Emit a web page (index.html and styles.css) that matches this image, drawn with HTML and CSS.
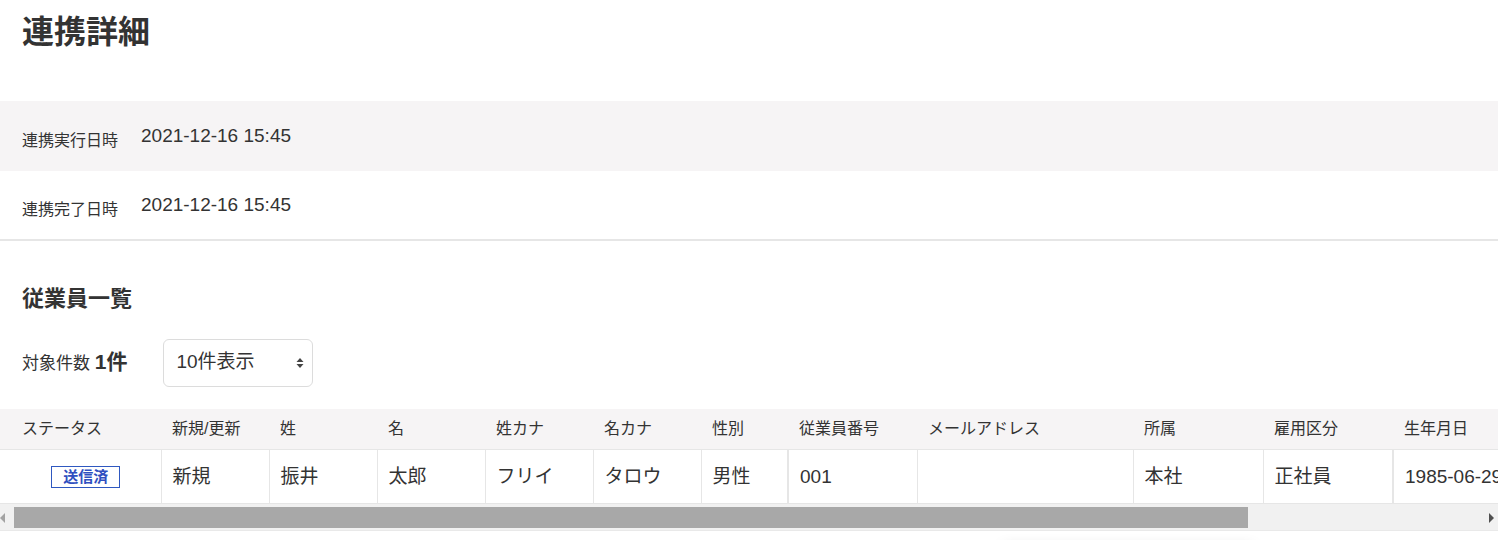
FILE: index.html
```html
<!DOCTYPE html>
<html lang="ja">
<head>
<meta charset="utf-8">
<title>連携詳細</title>
<link rel="stylesheet" href="styles.css">
</head>
<body>
<h1 class="page-title">連携詳細</h1>

<div class="info-list">
  <div class="info-row info-row--shaded">
    <span class="info-label">連携実行日時</span>
    <span class="info-value">2021-12-16 15:45</span>
  </div>
  <div class="info-row info-row--last">
    <span class="info-label">連携完了日時</span>
    <span class="info-value">2021-12-16 15:45</span>
  </div>
</div>

<section class="employees">
  <h2 class="section-title">従業員一覧</h2>
  <div class="count-row">
    <span class="count-label">対象件数 <strong class="count-num">1件</strong></span>
    <div class="select-box">
      <span class="select-text">10件表示</span>
      <svg class="select-arrows" width="8" height="12" viewBox="0 0 8 12"><path d="M4 1 L7.5 5 H0.5 Z M4 11 L7.5 7 H0.5 Z" fill="#444"/></svg>
    </div>
  </div>
</section>

<div class="table-scroll">
  <table class="emp-table">
    <colgroup>
      <col class="c161"><col class="c108"><col class="c108"><col class="c108"><col class="c108"><col class="c108"><col class="c87"><col class="c129"><col class="c216"><col class="c130"><col class="c130"><col class="c-last">
    </colgroup>
    <thead>
      <tr>
        <th class="first">ステータス</th>
        <th>新規/更新</th>
        <th>姓</th>
        <th>名</th>
        <th>姓カナ</th>
        <th>名カナ</th>
        <th>性別</th>
        <th>従業員番号</th>
        <th>メールアドレス</th>
        <th>所属</th>
        <th>雇用区分</th>
        <th>生年月日</th>
      </tr>
    </thead>
    <tbody>
      <tr>
        <td class="first status-cell"><span class="badge">送信済</span></td>
        <td>新規</td>
        <td>振井</td>
        <td>太郎</td>
        <td>フリイ</td>
        <td>タロウ</td>
        <td class="thick">男性</td>
        <td>001</td>
        <td></td>
        <td>本社</td>
        <td class="thick">正社員</td>
        <td class="last">1985-06-29</td>
      </tr>
    </tbody>
  </table>
</div>
<div class="hscroll">
  <div class="hscroll-btn">
    <svg width="6" height="10" viewBox="0 0 6 10"><path d="M5 0 V10 L0 5 Z" fill="#a3a3a3"/></svg>
  </div>
  <div class="hscroll-track">
    <div class="hscroll-thumb"></div>
  </div>
  <div class="hscroll-btn hscroll-btn--end">
    <svg width="6" height="10" viewBox="0 0 6 10"><path d="M1 0 V10 L6 5 Z" fill="#505050"/></svg>
  </div>
</div>

<div class="floating-shadow"></div>
</body>
</html>
```

FILE: styles.css
```css
html, body {
  margin: 0;
  padding: 0;
  background: #fff;
}
body {
  font-family: "Liberation Sans", "Noto Sans CJK JP", sans-serif;
  color: #333;
  overflow: hidden;
  height: 540px;
}

.page-title {
  margin: 0;
  height: 101px;
  box-sizing: border-box;
  padding: 13px 22px 0;
  font-size: 32px;
  line-height: 38px;
  font-weight: bold;
  color: #333;
}

.info-row {
  display: flex;
  align-items: center;
  height: 70px;
  box-sizing: border-box;
  padding: 0 22px;
}
.info-row--shaded {
  background: #f6f4f5;
}
.info-row--last {
  border-bottom: 2px solid #e6e6e6;
}
.info-label {
  width: 119px;
  font-size: 16px;
  line-height: 20px;
  margin-top: 9px;
}
.info-value {
  font-size: 19px;
  line-height: 22px;
}

.employees {
  padding: 0 22px;
}
.section-title {
  margin: 44px 0 0;
  font-size: 22px;
  line-height: 28px;
  font-weight: bold;
}
.count-row {
  display: flex;
  align-items: center;
  gap: 36px;
  margin-top: 26px;
  height: 48px;
}
.count-label {
  font-size: 17px;
  line-height: 24px;
}
.count-num {
  font-size: 21px;
  font-weight: bold;
}
.select-box {
  width: 150px;
  height: 48px;
  box-sizing: border-box;
  border: 1px solid #dcdcdc;
  border-radius: 6px;
  display: flex;
  align-items: center;
  justify-content: space-between;
  padding: 0 8px 0 12px;
}
.select-text {
  font-size: 19px;
  line-height: 22px;
  margin-top: -2px;
}

.table-scroll {
  margin-top: 22px;
  overflow: hidden;
}

.emp-table {
  border-collapse: collapse;
  table-layout: fixed;
  width: 1785px;
}
.c161 { width: 161px; }
.c108 { width: 108px; }
.c87 { width: 87px; }
.c129 { width: 129px; }
.c216 { width: 216px; }
.c130 { width: 130px; }
.c-last { width: 392px; }

.emp-table th {
  height: 40px;
  padding: 0 11px;
  background: #f6f4f5;
  font-size: 16px;
  font-weight: normal;
  text-align: left;
  line-height: 20px;
  border-bottom: 1px solid #e6e6e6;
  white-space: nowrap;
}
.emp-table td {
  height: 54px;
  padding: 0 11px;
  font-size: 19px;
  line-height: 24px;
  border-right: 1px solid #e6e6e6;
  border-bottom: 1px solid #e6e6e6;
  white-space: nowrap;
  box-sizing: border-box;
}
.emp-table th.first,
.emp-table td.first {
  padding-left: 22px;
}
.emp-table td.thick {
  border-right: 2px solid #e6e6e6;
}
.emp-table td.last {
  border-right: none;
}
.status-cell {
  text-align: center;
}
.badge {
  display: inline-block;
  border: 1px solid #2f58c0;
  color: #2f4fc0;
  font-size: 15px;
  font-weight: bold;
  line-height: 20px;
  padding: 0 11px;
  margin-left: 0;
  vertical-align: middle;
}

.hscroll {
  display: flex;
  height: 26px;
  background: #f1f1f1;
  border-bottom: 1px solid #e9e9e9;
}
.hscroll-btn {
  width: 14px;
  display: flex;
  align-items: center;
  justify-content: flex-start;
  padding-top: 1px;
}
.hscroll-btn--end {
  justify-content: center;
}
.hscroll-track {
  flex: 1;
  padding: 3px 0 2px;
}
.hscroll-thumb {
  width: 1234px;
  height: 100%;
  background: #a8a8a8;
}

.floating-shadow {
  position: fixed;
  left: 1003px;
  width: 250px;
  top: 546px;
  height: 40px;
  background: #fff;
  box-shadow: 0 0 14px rgba(0, 0, 0, 0.13);
}
```
